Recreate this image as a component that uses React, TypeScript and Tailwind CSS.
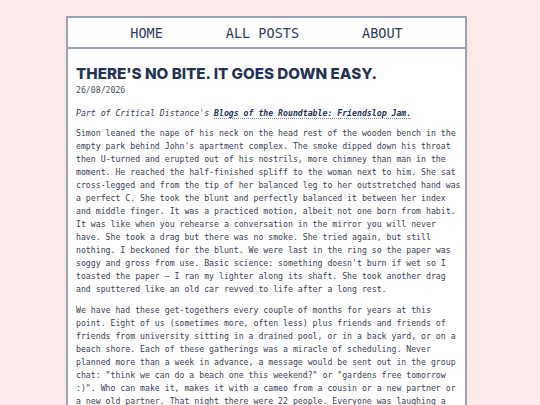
import React from 'react';

const mono = { fontFamily: '"DejaVu Sans Mono", "Liberation Mono", monospace' };

const paragraphs = [
  "Simon leaned the nape of his neck on the head rest of the wooden bench in the empty park behind John's apartment complex. The smoke dipped down his throat then U-turned and erupted out of his nostrils, more chimney than man in the moment. He reached the half-finished spliff to the woman next to him. She sat cross-legged and from the tip of her balanced leg to her outstretched hand was a perfect C. She took the blunt and perfectly balanced it between her index and middle finger. It was a practiced motion, albeit not one born from habit. It was like when you rehearse a conversation in the mirror you will never have. She took a drag but there was no smoke. She tried again, but still nothing. I beckoned for the blunt. We were last in the ring so the paper was soggy and gross from use. Basic science: something doesn't burn if wet so I toasted the paper \u2013 I ran my lighter along its shaft. She took another drag and sputtered like an old car revved to life after a long rest.",
  "We have had these get-togethers every couple of months for years at this point. Eight of us (sometimes more, often less) plus friends and friends of friends from university sitting in a drained pool, or in a back yard, or on a beach shore. Each of these gatherings was a miracle of scheduling. Never planned more than a week in advance, a message would be sent out in the group chat: \"think we can do a beach one this weekend?\" or \"gardens free tomorrow :)\". Who can make it, makes it with a cameo from a cousin or a new partner or a new old partner. That night there were 22 people. Everyone was laughing a little too loud and the music was a little too quiet, which is how we liked it.",
];

const App: React.FC = () => {
  return (
    <div className="min-h-[405px] bg-[#fde8ea] pt-[16px]">
      <div className="ml-[66px] w-[401px] border-2 border-[#9ca3b0] bg-white">
        <nav
          className="flex h-[31px] items-center justify-center gap-[63px] border-b-2 border-[#9ca3b0] pt-[2px] text-[13.5px] text-[#2f3c5a]"
          style={mono}
        >
          <span>HOME</span>
          <span>ALL POSTS</span>
          <span>ABOUT</span>
        </nav>
        <div className="px-[8px] pt-[17px] pb-[20px]">
          <h1
            className="text-[15.2px] font-extrabold leading-[16px] text-[#253352]"
            style={{ fontFamily: 'Inter, "Noto Sans", sans-serif' }}
          >
            THERE'S NO BITE. IT GOES DOWN EASY.
          </h1>
          <div className="mt-[3px] text-[8.2px] leading-[11px] text-[#4a5060]" style={mono}>
            26/08/2026
          </div>
          <div className="w-[386px] text-[8.2px] leading-[13px] text-[#3b4254]" style={mono}>
            <p className="mt-[11px] mb-[7px] italic">
              Part of Critical Distance's{' '}
              <span className="font-bold text-[#253352] underline decoration-dotted decoration-[#8a93a6] underline-offset-2">
                Blogs of the Roundtable: Friendslop Jam.
              </span>
            </p>
            {paragraphs.map((p, i) => (
              <p key={i} className="mb-[8px]">
                {p}
              </p>
            ))}
          </div>
        </div>
      </div>
    </div>
  );
};

export default App;
